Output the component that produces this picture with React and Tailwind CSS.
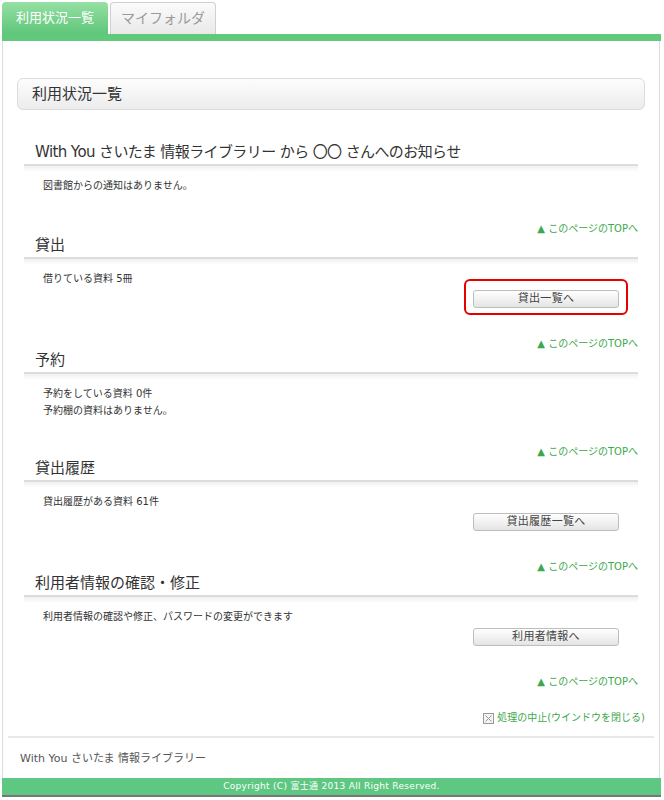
import React from 'react'

const font = { fontFamily: '"DejaVu Sans", "Noto Sans CJK JP", sans-serif' }

function Heading({ children, tight }) {
    return (
        <div>
            <div className={`pl-[11px] text-[15px] leading-[18px] text-[#333] ${tight ? 'tracking-[-0.6px]' : ''}`}>{children}</div>
            <div className="mt-[3px] h-[2px] bg-[#dcdcdc]" />
            <div className="h-[6px] bg-gradient-to-b from-[#f0f0f0] to-white" />
        </div>
    )
}

function TopLink({ mt = 'mt-[28px]' }) {
    return (
        <div className={`${mt} flex justify-end text-[10px] leading-[14px] text-[#3da84c]`}>
            <span>▲ このページのTOPへ</span>
        </div>
    )
}

function Button({ label, highlight }) {
    return (
        <div className="-mt-[2px] flex justify-end pr-[19px]">
            <div className="relative">
                <button className="w-[146px] h-[18px] rounded-[3px] border border-[#bdbdbd] bg-gradient-to-b from-white to-[#e4e4e4] text-[11px] leading-[16px] tracking-[0.3px] text-[#444]">
                    {label}
                </button>
                {highlight && (
                    <div className="absolute -left-[9px] -right-[9px] -top-[6px] -bottom-[6px] rounded-[6px] border-2 border-[#e60000]" />
                )}
            </div>
        </div>
    )
}

function Body({ lines }) {
    return (
        <div className="pt-[5px] pl-[19px] text-[10px] leading-[17px] text-[#333]">
            {lines.map((l) => (
                <div key={l}>{l}</div>
            ))}
        </div>
    )
}

export default function App() {
    return (
        <div className="w-[664px] h-[800px] bg-white overflow-hidden" style={font}>
            <div className="ml-[2px] w-[659px] pt-[2px]">
                {/* Tabs */}
                <div className="flex gap-[2px] h-[32px]">
                    <div className="w-[106px] rounded-t-[4px] bg-gradient-to-b from-[#95e0a3] to-[#5ec67a] flex items-center justify-center text-[13px] text-white">
                        利用状況一覧
                    </div>
                    <div className="w-[106px] rounded-t-[4px] border border-b-0 border-[#d0d0d0] bg-gradient-to-b from-[#fbfbfb] to-[#e9e9e9] flex items-center justify-center text-[14px] text-[#9a9a9a]">
                        マイフォルダ
                    </div>
                </div>
                <div className="h-[7px] bg-[#60c97c]" />

                {/* Panel */}
                <div className="w-[658px] h-[737px] border-x border-[#dddddd] flex flex-col">
                    <div className="mt-[37px] mx-[14px] h-[32px] rounded-[6px] border border-[#dcdcdc] bg-gradient-to-b from-[#fdfdfd] to-[#ececec] flex items-center pl-[14px] text-[15px] text-[#333]">
                        利用状況一覧
                    </div>

                    <div className="mt-[33px] ml-[21px] mr-[21px]">
                        <Heading tight>With You さいたま 情報ライブラリー から 〇〇 さんへのお知らせ</Heading>
                        <Body lines={['図書館からの通知はありません。']} />
                        <TopLink mt="mt-[28px]" />

                        <Heading>貸出</Heading>
                        <Body lines={['借りている資料 5冊']} />
                        <Button label="貸出一覧へ" highlight />
                        <TopLink />

                        <Heading>予約</Heading>
                        <Body lines={['予約をしている資料 0件', '予約棚の資料はありません。']} />
                        <TopLink mt="mt-[26px]" />

                        <Heading>貸出履歴</Heading>
                        <Body lines={['貸出履歴がある資料 61件']} />
                        <Button label="貸出履歴一覧へ" />
                        <TopLink />

                        <Heading>利用者情報の確認・修正</Heading>
                        <Body lines={['利用者情報の確認や修正、パスワードの変更ができます']} />
                        <Button label="利用者情報へ" />
                        <TopLink />
                    </div>

                    <div className="mt-[22px] mr-[14px] flex justify-end items-center gap-[3px] text-[10px] leading-[14px] text-[#3da84c]">
                        <svg width="11" height="11" viewBox="0 0 11 11">
                            <rect x="0.5" y="0.5" width="10" height="10" fill="#f4f4f4" stroke="#999" />
                            <path d="M2.5 2.5 L8.5 8.5 M8.5 2.5 L2.5 8.5" stroke="#999" strokeWidth="1" />
                        </svg>
                        <span>処理の中止(ウインドウを閉じる)</span>
                    </div>

                    <div className="mt-[11px] mx-[5px] h-[2px] bg-[#e8e8e8]" />

                    <div className="mt-[14px] pl-[17px] text-[11px] leading-[14px] text-[#555]">
                        With You さいたま 情報ライブラリー
                    </div>
                </div>

                <div className="h-[17px] bg-[#5ec882] flex items-center justify-center text-[9px] text-white tracking-[0.3px]">
                    Copyright (C) 富士通 2013 All Right Reserved.
                </div>
                <div className="h-[2px] bg-[#777]" />
            </div>
        </div>
    )
}
